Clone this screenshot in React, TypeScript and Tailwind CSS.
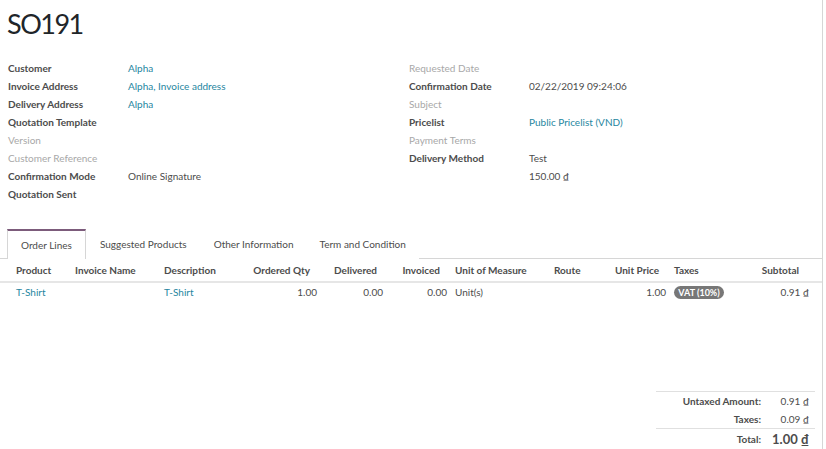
import type { ReactNode } from 'react'

const font = { fontFamily: 'Lato, "Open Sans", sans-serif' }

function Field({ label, muted, children }: { label: string; muted?: boolean; children?: ReactNode }) {
  return (
    <div className="flex h-[18px] items-center">
      <div className={`w-[120px] shrink-0 ${muted ? 'text-[#a8a8a8]' : 'font-bold text-[#4c4c4c]'}`}>{label}</div>
      <div className="text-[#4c4c4c]">{children}</div>
    </div>
  )
}

const Link = ({ children }: { children: ReactNode }) => <span className="text-[#1f86a0]">{children}</span>

export default function App() {
  return (
    <div style={font} className="h-[449px] w-[826px] overflow-hidden bg-white text-[10px] text-[#4c4c4c]">
      <div className="h-full w-[823px] border-r border-[#d6d6d6]">
        {/* title */}
        <h1 className="pl-[7px] pt-[8px] text-[27px] leading-[32px] tracking-[-1.5px] text-[#212529]">SO191</h1>

        {/* header fields */}
        <div className="mt-[19px] flex pl-[8px]">
          <div className="w-[401px]">
            <Field label="Customer"><Link>Alpha</Link></Field>
            <Field label="Invoice Address"><Link>Alpha, Invoice address</Link></Field>
            <Field label="Delivery Address"><Link>Alpha</Link></Field>
            <Field label="Quotation Template" />
            <Field label="Version" muted />
            <Field label="Customer Reference" muted />
            <Field label="Confirmation Mode">Online Signature</Field>
            <Field label="Quotation Sent" />
          </div>
          <div>
            <Field label="Requested Date" muted />
            <Field label="Confirmation Date">02/22/2019 09:24:06</Field>
            <Field label="Subject" muted />
            <Field label="Pricelist"><Link>Public Pricelist (VND)</Link></Field>
            <Field label="Payment Terms" muted />
            <Field label="Delivery Method">Test</Field>
            <Field label="">150.00 ₫</Field>
          </div>
        </div>

        {/* notebook tabs */}
        <div className="mt-[26px] flex h-[30px]">
          <div className="w-[7px] border-b border-[#d6d6d6]" />
          <div className="flex items-center border-x border-t-2 border-[#d6d6d6] border-t-[#7c5b7b] px-[13px]">Order Lines</div>
          <div className="flex items-center px-[14px]">Suggested Products</div>
          <div className="flex items-center px-[13px]">Other Information</div>
          <div className="flex items-center px-[13px]">Term and Condition</div>
          <div className="flex-1 border-b border-[#d6d6d6]" />
        </div>

        {/* order lines */}
        <table className="w-[822px] table-fixed border-collapse">
          <colgroup>
            <col className="w-[71px]" />
            <col className="w-[89px]" />
            <col className="w-[80px]" />
            <col className="w-[81px]" />
            <col className="w-[66px]" />
            <col className="w-[64px]" />
            <col className="w-[99px]" />
            <col className="w-[50px]" />
            <col className="w-[70px]" />
            <col className="w-[70px]" />
            <col className="w-[82px]" />
          </colgroup>
          <thead>
            <tr className="h-[23px] border-b-2 border-[#e6e6e6] font-bold">
              <th className="pl-[16px] text-left font-bold">Product</th>
              <th className="pl-[4px] text-left font-bold">Invoice Name</th>
              <th className="pl-[4px] text-left font-bold">Description</th>
              <th className="pr-[11px] text-right font-bold">Ordered Qty</th>
              <th className="pr-[10px] text-right font-bold">Delivered</th>
              <th className="pr-[11px] text-right font-bold">Invoiced</th>
              <th className="pl-[4px] text-left font-bold">Unit of Measure</th>
              <th className="pl-[4px] text-left font-bold">Route</th>
              <th className="pr-[11px] text-right font-bold">Unit Price</th>
              <th className="pl-[4px] text-left font-bold">Taxes</th>
              <th className="pr-[23px] text-right font-bold">Subtotal</th>
            </tr>
          </thead>
          <tbody>
            <tr className="h-[20px]">
              <td className="pl-[16px]"><Link>T-Shirt</Link></td>
              <td />
              <td className="pl-[4px]"><Link>T-Shirt</Link></td>
              <td className="pr-[4px] text-right">1.00</td>
              <td className="pr-[4px] text-right">0.00</td>
              <td className="pr-[4px] text-right">0.00</td>
              <td className="pl-[4px]">Unit(s)</td>
              <td />
              <td className="pr-[4px] text-right">1.00</td>
              <td className="pl-[4px]">
                <span className="inline-flex h-[13px] w-[50px] items-center justify-center rounded-full bg-[#777777] text-[9px] font-bold text-white">VAT (10%)</span>
              </td>
              <td className="pr-[13px] text-right">0.91 ₫</td>
            </tr>
          </tbody>
        </table>

        {/* totals */}
        <div className="mt-[89px] flex justify-end pr-[7px]">
          <div className="w-[159px] border-t border-[#e0e0e0]">
            <div className="flex h-[18px] items-center">
              <div className="w-[105px] text-right font-bold">Untaxed Amount:</div>
              <div className="flex-1 pr-[6px] text-right">0.91 ₫</div>
            </div>
            <div className="flex h-[18px] items-center">
              <div className="w-[105px] text-right font-bold">Taxes:</div>
              <div className="flex-1 pr-[6px] text-right">0.09 ₫</div>
            </div>
            <div className="flex h-[22px] items-center border-t border-[#e0e0e0]">
              <div className="w-[105px] text-right font-bold">Total:</div>
              <div className="flex-1 pr-[6px] text-right text-[13px] font-bold">1.00 ₫</div>
            </div>
          </div>
        </div>
      </div>
    </div>
  )
}
